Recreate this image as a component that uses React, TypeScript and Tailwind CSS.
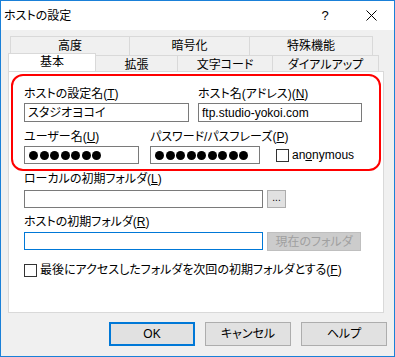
import React from 'react';

const Key = ({ k }: { k: string }) => (
  <span>(<u className="underline-offset-[1px]">{k}</u>)</span>
);

const Dots = ({ n }: { n: number }) => (
  <div className="flex items-center gap-[1.5px] pl-[4px]">
    {Array.from({ length: n }).map((_, i) => (
      <span key={i} className="w-[9px] h-[9px] rounded-full bg-black" />
    ))}
  </div>
);

const Check = () => <span className="w-[13px] h-[13px] border border-[#333] bg-white shrink-0" />;

const topTabs = [
  { label: '高度', w: 'w-[120px]' },
  { label: '暗号化', w: 'w-[121px]' },
  { label: '特殊機能', w: 'w-[124px]' },
];
const bottomTabs = [
  { label: '拡張', w: 'w-[83px]' },
  { label: '文字コード', w: 'w-[96px]' },
  { label: 'ダイアルアップ', w: 'w-[107px]' },
];

export default function App() {
  return (
    <div className="w-[395px] h-[357px] border border-[#1a80d8] bg-[#f0f0f0] flex flex-col text-[12px] leading-[14px] text-black whitespace-nowrap [font-family:'Liberation_Sans','Noto_Sans_CJK_JP',sans-serif] [font-feature-settings:'palt']">
      {/* title bar */}
      <div className="h-[29px] bg-white flex items-center pl-[3px] shrink-0">
        <span className="text-[12px]">ホストの設定</span>
        <span className="ml-auto w-[46px] text-center text-[13px]">?</span>
        <span className="w-[46px] flex justify-center">
          <svg width="11" height="11" viewBox="0 0 11 11" stroke="#000" strokeWidth="1">
            <path d="M0.5 0.5 L10.5 10.5 M10.5 0.5 L0.5 10.5" />
          </svg>
        </span>
      </div>

      <div className="flex-1 flex flex-col pt-[6px] pl-[7px]">
        {/* tabs */}
        <div className="flex pl-[2px]">
          {topTabs.map((t) => (
            <div key={t.label} className={`${t.w} h-[20px] border border-[#d9d9d9] -ml-px first:ml-0 flex items-end justify-center pb-[2px]`}>
              {t.label}
            </div>
          ))}
        </div>
        <div className="flex items-end h-[15px]">
          <div className="relative z-10 w-[88px] h-[18px] -mt-[3px] bg-white border border-b-0 border-[#d9d9d9] flex justify-center pt-[1px]">
            基本
          </div>
          {bottomTabs.map((t) => (
            <div key={t.label} className={`${t.w} h-[16px] border border-b-0 border-[#d9d9d9] -ml-px flex justify-center pt-[2px]`}>
              {t.label}
            </div>
          ))}
        </div>

        {/* panel */}
        <div className="w-[376px] h-[242px] bg-white border border-[#d9d9d9] pt-[2px] pl-[2px]">
          <div className="w-[370px] h-[97px] border-2 border-[#ff0000] rounded-[12px] pl-[11px] pt-[11px]">
            <div className="flex gap-[9px]">
              <div className="flex flex-col gap-[2px]">
                <span>ホストの設定名<Key k="T" /></span>
                <div className="w-[165px] h-[19px] border border-[#7a7a7a] flex items-center pl-[3px]">スタジオヨコイ</div>
              </div>
              <div className="flex flex-col gap-[2px]">
                <span>ホスト名(アドレス)<Key k="N" /></span>
                <div className="w-[164px] h-[19px] border border-[#7a7a7a] flex items-center pl-[3px]">ftp.studio-yokoi.com</div>
              </div>
            </div>
            <div className="flex gap-[11px] mt-[8px]">
              <div className="flex flex-col gap-[2px] w-[115px]">
                <span>ユーザー名<Key k="U" /></span>
                <div className="w-[115px] h-[18px] border border-[#7a7a7a] flex items-center"><Dots n={7} /></div>
              </div>
              <div className="flex flex-col gap-[2px] w-[110px]">
                <span>パスワード/パスフレーズ<Key k="P" /></span>
                <div className="w-[110px] h-[18px] border border-[#7a7a7a] flex items-center"><Dots n={9} /></div>
              </div>
              <div className="flex items-center gap-[3px] self-end h-[18px] ml-[5px]">
                <Check />
                <span>an<u className="underline-offset-[1px]">o</u>nymous</span>
              </div>
            </div>
          </div>

          <div className="pl-[13px]">
            <div className="mt-[1px]">ローカルの初期フォルダ<Key k="L" /></div>
            <div className="flex gap-[4px] mt-[4px]">
              <div className="w-[239px] h-[18px] border border-[#7a7a7a]" />
              <div className="w-[19px] h-[18px] border border-[#adadad] bg-[#e1e1e1] flex items-center justify-center text-[10px] leading-none pb-[2px]">...</div>
            </div>
            <div className="mt-[7px]">ホストの初期フォルダ<Key k="R" /></div>
            <div className="flex gap-[4px] mt-[3px]">
              <div className="w-[239px] h-[18px] border border-[#0078d7]" />
              <div className="w-[94px] h-[19px] border border-[#bfbfbf] bg-[#cccccc] text-[#a0a0a0] flex items-center justify-center">現在のフォルダ</div>
            </div>
            <div className="flex items-center gap-[3px] mt-[12px]">
              <Check />
              <span>最後にアクセスしたフォルダを次回の初期フォルダとする<Key k="F" /></span>
            </div>
          </div>
        </div>

        {/* buttons */}
        <div className="flex justify-end gap-[10px] pr-[7px] mt-[9px]">
          <button className="w-[86px] h-[24px] border-2 border-[#0078d7] bg-[#e1e1e1]">OK</button>
          <button className="w-[86px] h-[24px] border border-[#adadad] bg-[#e1e1e1]">キャンセル</button>
          <button className="w-[86px] h-[24px] border border-[#adadad] bg-[#e1e1e1]">ヘルプ</button>
        </div>
      </div>
    </div>
  );
}
